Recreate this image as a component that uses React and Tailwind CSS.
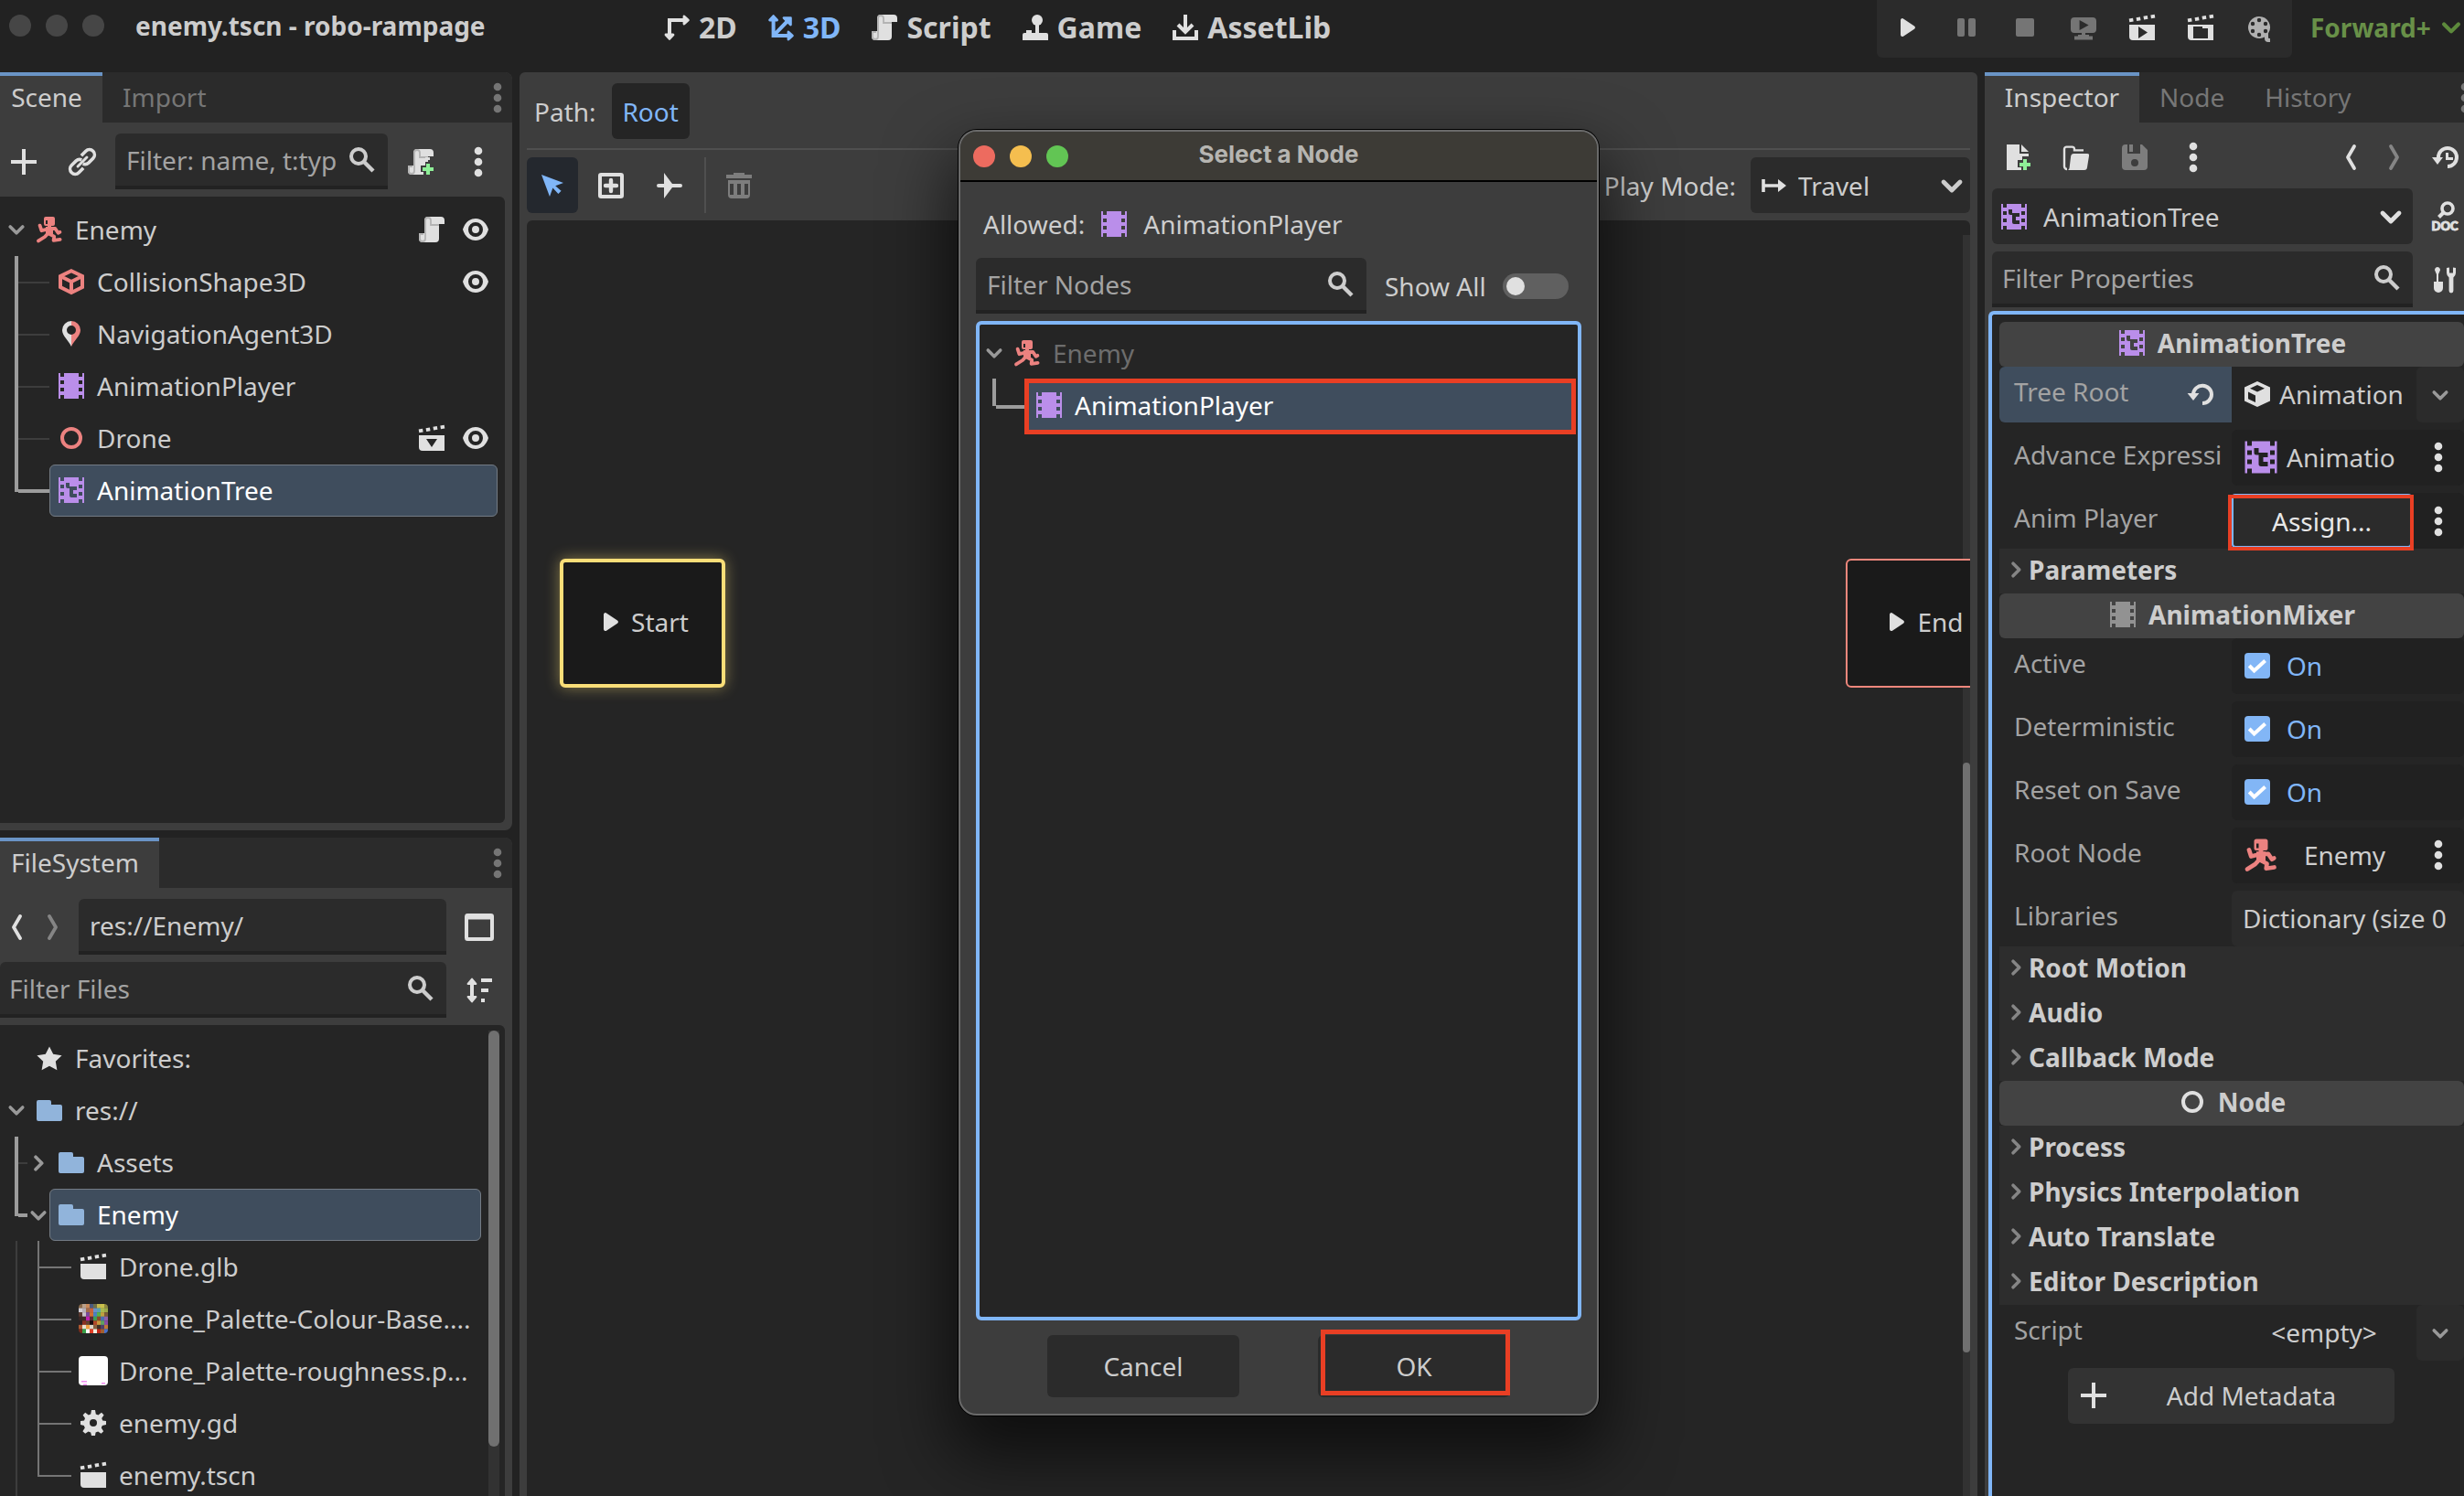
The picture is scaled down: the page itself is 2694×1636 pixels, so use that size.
import React from "react";

/* ---------- icons, drawn on a 16 unit grid ---------- */

function Icon({ size = "size-8", className = "", children }) {
  return (
    <svg viewBox="0 0 16 16" aria-hidden="true" className={`${size} shrink-0 ${className}`} fill="currentColor">
      {children}
    </svg>
  );
}

const FILM =
  "M1 1v14h1v-2h2v2h8v-2h2v2h1V1h-1v2h-2V1H4v2H2V1zM2 5h2v2H2zM12 5h2v2h-2zM2 9h2v2H2zM12 9h2v2h-2z";

const AnimationPlayer = ({ size, className = "text-[#ba8eea]" }) => (
  <Icon size={size} className={className}>
    <path fillRule="evenodd" d={FILM} />
  </Icon>
);

const AnimationTree = ({ size, className = "text-[#ba8eea]" }) => (
  <Icon size={size} className={className}>
    <path fillRule="evenodd" d={FILM + "M5 4v2a1 1 0 0 0 1 1h1v4a1 1 0 0 0 1 1h3v-2H9V8h2V6H7V4z"} />
  </Icon>
);

const Runner = ({ size }) => (
  <Icon size={size} className="text-[#ec8280]">
    <path fillRule="evenodd" d="M6 1h4a1 1 0 0 1 1 1v3a1 1 0 0 1-1 1H9v1H7V6H6a1 1 0 0 1-1-1V2a1 1 0 0 1 1-1zm0 2v2h1V3z" />
    <path d="M6 6.500h4v4L8.500 11.500 6 10z" />
    <path
      d="M2.800 5.800 3.700 8.600 7 7.800M9.500 7.500h1.700l1.600 2.400.9-.5M7.500 9.800 5.500 12 2 14.200M8 10.400l2.600 1.400-.3 2.100 3.500-.5"
      fill="none"
      stroke="currentColor"
      strokeWidth="1.900"
      strokeLinecap="round"
      strokeLinejoin="round"
    />
  </Icon>
);

const ScriptIcon = ({ plus, size }) => (
  <Icon size={size} className="text-[#e0e0e0]">
    <path d="M6 1a2 2 0 0 0-2 2v7H1v3a2 2 0 0 0 2 2h7a2 2 0 0 0 2-2V5h3V3a2 2 0 0 0-2-2z" />
    <path
      d="M3.500 10.500h-2V13a1.500 1.500 0 0 0 3 0V3A1.500 1.500 0 0 1 6 1.500 1.500 1.500 0 0 1 7.500 3v2.500H12"
      fill="none"
      stroke="#b3b3b3"
      strokeWidth=".9"
    />
    {plus && (
      <>
        <path d="M10.500 5.500H16V16H9.500v-2.500H8v-3.500h2.500z" fill="#3d3d3d" />
        <path d="M10.500 5.500H13v1.500h-1V8h-1.500z" />
        <path d="M11 9h2v2h2v2h-2v2h-2v-2H9v-2h2z" fill="#8eef97" />
      </>
    )}
  </Icon>
);

const Eye = () => (
  <Icon className="text-[#e0e0e0]">
    <path
      fillRule="evenodd"
      d="M8 2C4.500 2 2 4.500 1 8c1 3.500 3.500 6 7 6s6-2.500 7-6c-1-3.500-3.500-6-7-6zm0 2a4 4 0 0 1 0 8 4 4 0 0 1 0-8zm0 2a2 2 0 0 0 0 4 2 2 0 0 0 0-4z"
    />
  </Icon>
);

const CollisionShape = () => (
  <Icon className="text-[#ec8280]">
    <path d="M8 2.100 14 5v6l-6 3-6-3V5zM2 5l6 3 6-3M8 8v6" fill="none" stroke="currentColor" strokeWidth="2" />
  </Icon>
);

const NavAgent = () => (
  <Icon>
    <path d="M8 1a5 5 0 0 0-5 5c0 3.200 3.500 5.500 5 9V8.500a2.500 2.500 0 0 1 0-5z" fill="#e0e0e0" />
    <path d="M8 1a5 5 0 0 1 5 5c0 3.200-3.500 5.500-5 9V8.500a2.500 2.500 0 0 0 0-5z" fill="#ec8280" />
  </Icon>
);

const NodeRing = ({ className = "text-[#ec8280]" }) => (
  <Icon className={className}>
    <circle cx="8" cy="8" r="5" fill="none" stroke="currentColor" strokeWidth="2" />
  </Icon>
);

const Clapper = ({ mark }) => (
  <Icon className="text-[#e0e0e0]">
    <path d="M1 4.200 15 1.800" fill="none" stroke="currentColor" strokeWidth="1.900" strokeDasharray="2.200 1.800" />
    {!mark && <path d="M1 6.500h14V15H3a2 2 0 0 1-2-2z" />}
    {mark === "down" && <path fillRule="evenodd" d="M1 6.500h14V15H3a2 2 0 0 1-2-2zM5 8.500l3 4.500 3-4.500z" />}
    {mark === "play" && <path fillRule="evenodd" d="M1 6.500h14V15H3a2 2 0 0 1-2-2zM6 7.500v6.500l5-3.200z" />}
    {mark === "folder" && <path fillRule="evenodd" d="M1 6.500h14V15H3a2 2 0 0 1-2-2zM4 7.500V14h8V8.500H9v-1z" />}
  </Icon>
);

const Search = () => (
  <Icon className="text-[#cdcdcd]">
    <circle cx="6" cy="6" r="4" fill="none" stroke="currentColor" strokeWidth="2" />
    <path d="m9 9 5 5" stroke="currentColor" strokeWidth="2.200" />
  </Icon>
);

const Plus = () => (
  <Icon className="text-[#e0e0e0]">
    <path d="M7 1h2v6h6v2H9v6H7V9H1V7h6z" />
  </Icon>
);

const LinkIcon = () => (
  <Icon className="text-[#e0e0e0]">
    <g transform="rotate(-45 8 8)" fill="none" stroke="currentColor" strokeWidth="1.800">
      <path d="M6 10.800H2.500a2.800 2.800 0 0 1 0-5.600H6A2.800 2.800 0 0 1 8.500 7" />
      <path d="M10 5.200h3.500a2.800 2.800 0 0 1 0 5.600H10A2.800 2.800 0 0 1 7.500 9" />
      <path d="M4.500 8h7" strokeLinecap="round" strokeWidth="1.500" />
    </g>
  </Icon>
);

const Folder = () => (
  <Icon className="text-[#91b4db]">
    <path d="M2 2.500h6a1 1 0 0 1 1 1v1.500h5a1 1 0 0 1 1 1v7a1 1 0 0 1-1 1H2a1 1 0 0 1-1-1v-9.500a1 1 0 0 1 1-1z" />
  </Icon>
);

const Star = () => (
  <Icon className="text-[#e0e0e0]">
    <path d="m8 1.700 2.100 4.200 4.700.7-3.400 3.300.8 4.700L8 12.400l-4.200 2.200.8-4.700L1.200 6.600l4.700-.7z" />
  </Icon>
);

const Gear = () => (
  <Icon className="text-[#e0e0e0]">
    <path
      fillRule="evenodd"
      d="M7 1h2l.4 2.200 1.300.5 1.800-1.300 1.300 1.300-1.200 1.800.5 1.300L15 7v2l-2.100.5-.5 1.200 1.200 1.900-1.300 1.300-1.700-1.200-1.300.5L9 15H7l-.4-1.800-1.300-.5-1.700 1.200-1.400-1.300 1.200-1.900-.5-1.200L1 9V7l2-.2.5-1.300-1.200-1.800 1.300-1.300 1.800 1.300 1.200-.5zM8 6a2 2 0 0 0 0 4 2 2 0 0 0 0-4z"
    />
  </Icon>
);

function Chevron({ dir = "down", className = "text-[#999]", size = "size-6" }) {
  const d = dir === "down" ? "M3.500 6 8 10.500 12.500 6" : "M6 3.500 10.500 8 6 12.500";
  return (
    <Icon size={size} className={className}>
      <path d={d} fill="none" stroke="currentColor" strokeWidth="2.400" strokeLinecap="round" strokeLinejoin="round" />
    </Icon>
  );
}

function Dots({ className = "text-[#e0e0e0]" }) {
  return (
    <svg viewBox="0 0 10 34" aria-hidden="true" className={`h-[34px] w-[10px] shrink-0 ${className}`} fill="currentColor">
      <circle cx="5" cy="5" r="4.300" />
      <circle cx="5" cy="17" r="4.300" />
      <circle cx="5" cy="29" r="4.300" />
    </svg>
  );
}

const Angle = ({ dir, size, className = "text-[#e0e0e0]" }) => (
  <Icon size={size} className={className}>
    <path
      d={dir === "left" ? "M10 2 6.500 8l3.500 6" : "M6 2l3.500 6L6 14"}
      fill="none"
      stroke="currentColor"
      strokeWidth="1.900"
      strokeLinecap="round"
      strokeLinejoin="round"
    />
  </Icon>
);

const PlaySmall = () => (
  <Icon size="size-8" className="text-[#e0e0e0]">
    <path d="M4 4v8a1 1 0 0 0 1.500.9l6-4a1 1 0 0 0 0-1.700l-6-4A1 1 0 0 0 4 4z" />
  </Icon>
);

/* ---------- shared pieces ---------- */

function IconButton({ label, className = "", children }) {
  return (
    <button type="button" aria-label={label} className={`flex shrink-0 items-center justify-center rounded-md ${className}`}>
      {children}
    </button>
  );
}

function SearchBox({ placeholder, className = "", pad = "px-3" }) {
  return (
    <div className={`flex h-[61px] min-w-0 items-center rounded-t-md border-b-4 border-[#222] bg-[#2b2b2b] ${pad} ${className}`}>
      <input
        type="text"
        aria-label={placeholder}
        placeholder={placeholder}
        className="w-full min-w-0 bg-transparent text-[#cdcdcd] outline-none placeholder:text-[#a3a3a3]"
      />
      <Search />
    </div>
  );
}

function Tab({ active, className = "", children }) {
  return (
    <button
      type="button"
      role="tab"
      aria-selected={!!active}
      className={`h-[55px] shrink-0 border-t-4 pb-1.5 ${
        active ? "border-[#6a94c6] bg-[#3d3d3d] text-[#cdcdcd]" : "border-transparent text-[#767676]"
      } ${className}`}
    >
      {children}
    </button>
  );
}

/* ---------- top bar ---------- */

const MODES = [
  {
    name: "2D",
    icon: (
      <Icon className="text-[#e0e0e0]">
        <path d="M4 13V4h9" fill="none" stroke="currentColor" strokeWidth="2" />
        <path
          d="m12 2 2.200 2L12 6zM2 12l2 2.200L6 12z"
          stroke="currentColor"
          strokeWidth="1.400"
          strokeLinejoin="round"
        />
      </Icon>
    ),
  },
  {
    name: "3D",
    active: true,
    icon: (
      <Icon className="text-[#80b6f8]">
        <path d="M3.800 3v9.500H13M4 12.300 12 4" fill="none" stroke="currentColor" strokeWidth="2" />
        <path
          d="M1.800 4 3.800 1.800 5.800 4zM12 10.500l2.200 2-2.200 2zM9.500 2.800h3.700v3.700z"
          stroke="currentColor"
          strokeWidth="1.400"
          strokeLinejoin="round"
        />
      </Icon>
    ),
  },
  { name: "Script", icon: <ScriptIcon /> },
  {
    name: "Game",
    icon: (
      <Icon className="text-[#e0e0e0]">
        <circle cx="9" cy="4" r="3" />
        <path d="M8 6h2v5h4a1 1 0 0 1 1 1v3H1v-3a1 1 0 0 1 1-1h1V9.500h3V11h2z" />
      </Icon>
    ),
  },
  {
    name: "AssetLib",
    icon: (
      <Icon className="text-[#e0e0e0]">
        <path d="M8 1v9M4 6.500l4 4 4-4M2 9.500V14h12V9.500" fill="none" stroke="currentColor" strokeWidth="2" />
      </Icon>
    ),
  },
];

const RUN_BUTTONS = [
  ["Play", <PlaySmall />],
  [
    "Pause",
    <Icon className="text-[#757575]">
      <rect x="3" y="3" width="4" height="10" rx="1" />
      <rect x="9" y="3" width="4" height="10" rx="1" />
    </Icon>,
  ],
  [
    "Stop",
    <Icon className="text-[#757575]">
      <rect x="3" y="3" width="10" height="10" rx="1" />
    </Icon>,
  ],
  [
    "Remote Debug",
    <Icon className="text-[#757575]">
      <path fillRule="evenodd" d="M3 2.500h10a2 2 0 0 1 2 2v4.500a2 2 0 0 1-2 2H9v1h2v.8h2v2H3v-2h2V12h2v-1H3a2 2 0 0 1-2-2V4.500a2 2 0 0 1 2-2zM5.800 4v5.500l5-2.700z" />
    </Icon>,
  ],
  ["Play Scene", <Clapper mark="play" />],
  ["Play Custom Scene", <Clapper mark="folder" />],
  [
    "Movie Maker",
    <Icon className="text-[#b0b0b0]">
      <path
        fillRule="evenodd"
        d="M8 2a6 6 0 1 0 3 11.200V14a2 2 0 0 0 2 2h1v-2h-.5a.5.500 0 0 1-.5-.5V11.300A6 6 0 0 0 8 2zm0 .9a1.100 1.100 0 1 1 0 2.200 1.100 1.100 0 0 1 0-2.200zm0 8a1.100 1.100 0 1 1 0 2.200 1.100 1.100 0 0 1 0-2.200zM4.500 4.900a1.100 1.100 0 1 1 0 2.200 1.100 1.100 0 0 1 0-2.200zm7 0a1.100 1.100 0 1 1 0 2.200 1.100 1.100 0 0 1 0-2.200zm-7 4a1.100 1.100 0 1 1 0 2.200 1.100 1.100 0 0 1 0-2.200zm7 0a1.100 1.100 0 1 1 0 2.200 1.100 1.100 0 0 1 0-2.200z"
      />
    </Icon>,
  ],
];

function TopBar() {
  return (
    <header className="flex h-[79px] shrink-0 items-start font-bold text-[#cdcdcd]">
      <div className="flex h-14 w-[724px] shrink-0 items-center pl-[10px]">
        <div className="flex gap-4">
          <span className="size-6 rounded-full bg-[#464646]" />
          <span className="size-6 rounded-full bg-[#464646]" />
          <span className="size-6 rounded-full bg-[#464646]" />
        </div>
        <h1 className="ml-[34px]">enemy.tscn - robo-rampage</h1>
      </div>
      <nav className="flex h-[60px] items-center gap-8 text-[32px]">
        {MODES.map((m) => (
          <button
            key={m.name}
            type="button"
            className={`flex items-center gap-2 ${m.active ? "text-[#80b6f8]" : ""}`}
          >
            {m.icon}
            {m.name}
          </button>
        ))}
      </nav>
      <div className="ml-auto flex h-[63px] items-center gap-8 rounded-b-md bg-[#2b2b2b] pr-5 pl-[18px] pb-1">
        {RUN_BUTTONS.map(([label, icon]) => (
          <IconButton key={label} label={label} className="size-8">
            {icon}
          </IconButton>
        ))}
      </div>
      <button type="button" className="flex h-[60px] w-[188px] items-center justify-between pl-5 text-[#689048]">
        Forward+
        <Chevron className="text-[#5d8a3c]" size="size-7" />
      </button>
    </header>
  );
}

/* ---------- trees ---------- */

function Branch({ last, width, thick = true }) {
  return (
    <div className="flex h-full shrink-0">
      <div className={`${thick ? "w-1 bg-[#9c9c9c]" : "w-0.5 bg-[#757575]"} ${last ? "h-[30px]" : "h-full"}`} />
      <div className={`flex h-full items-center ${width}`}>
        <div className={`w-full ${!thick ? "h-0.5 bg-[#757575]" : last ? "h-1 bg-[#9c9c9c]" : "h-0.5 bg-[#3d3d3d]"}`} />
      </div>
    </div>
  );
}

const SCENE = [
  { name: "CollisionShape3D", icon: <CollisionShape />, eye: true },
  { name: "NavigationAgent3D", icon: <NavAgent /> },
  { name: "AnimationPlayer", icon: <AnimationPlayer /> },
  { name: "Drone", icon: <NodeRing />, eye: true, scene: true },
  { name: "AnimationTree", icon: <AnimationTree />, selected: true },
];

function SceneDock() {
  return (
    <section className="flex min-h-0 flex-col overflow-hidden rounded-r-lg bg-[#3d3d3d] pb-2">
      <div role="tablist" className="flex items-center bg-[#2b2b2b]">
        <Tab active className="w-[112px] pr-2.5">Scene</Tab>
        <Tab className="px-[22px]">Import</Tab>
        <IconButton label="Scene dock menu" className="mr-[11px] ml-auto">
          <Dots className="text-[#757575]" />
        </IconButton>
      </div>
      <div className="flex items-center py-3 pr-8 pb-2 pl-[10px]">
        <IconButton label="Add node"><Plus /></IconButton>
        <IconButton label="Instantiate scene" className="mr-5 ml-8"><LinkIcon /></IconButton>
        <SearchBox placeholder="Filter: name, t:typ" className="flex-1" />
        <IconButton label="Attach script" className="mr-[42px] ml-5"><ScriptIcon plus /></IconButton>
        <IconButton label="More options"><Dots /></IconButton>
      </div>
      <ul className="mr-2 min-h-0 flex-1 rounded-r-md bg-[#252525] pt-2">
        <li className="flex h-[57px] items-center pr-4 pb-0.5 pl-[6px]">
          <Chevron />
          <span className="mr-3 ml-2"><Runner /></span>
          Enemy
          <span className="ml-auto flex gap-4"><ScriptIcon /><Eye /></span>
        </li>
        {SCENE.map((n, i) => (
          <li key={n.name} className="flex h-[57px] items-center pr-2 pl-4">
            <Branch last={i === SCENE.length - 1} width="w-[34px]" />
            <div
              className={`flex h-full flex-1 items-center gap-3 rounded-md border px-[7px] pb-0.5 ${
                n.selected ? "border-[#737b84] bg-[#3f4d5d] text-white" : "border-transparent"
              }`}
            >
              {n.icon}
              {n.name}
              <span className="ml-auto flex gap-4">
                {n.scene && <Clapper mark="down" />}
                {n.eye && <Eye />}
              </span>
            </div>
          </li>
        ))}
      </ul>
    </section>
  );
}

const SWATCHES = [
  "#8a6a4a", "#b9a08a", "#c98a5a", "#4a5a80", "#6f7048", "#c4b84e", "#c9c04c", "#8f8a40",
  "#d0ccd4", "#b8b0b8", "#a06a4a", "#c8643c", "#6a90c8", "#5aa0b0", "#a8b850", "#9aa848",
  "#5a3a30", "#c8c0c8", "#7a4a9a", "#d07030", "#4a80c0", "#58b048", "#c0a040", "#7a5a3a",
  "#3a2826", "#402a28", "#c020b0", "#5a2a3a", "#3ea050", "#8a4a30", "#4a70b0", "#9060a8",
  "#2a2024", "#8a3020", "#604030", "#180c10", "#b04828", "#c89840", "#60a060", "#8a4aa0",
  "#b05a30", "#e8e0d0", "#f0a040", "#e0d8c8", "#8a6040", "#403028", "#50406a", "#c07838",
  "#7a2a1a", "#38a048", "#ffffff", "#e04028", "#f0f0e0", "#c02818", "#a06030", "#4a70c8",
];

const PaletteThumb = () => (
  <svg viewBox="0 0 8 7" preserveAspectRatio="none" aria-hidden="true" className="size-8 shrink-0 rounded-sm">
    {SWATCHES.map((c, i) => (
      <rect key={i} x={i % 8} y={Math.floor(i / 8)} width="1.050" height="1.050" fill={c} />
    ))}
  </svg>
);

const WhiteThumb = () => (
  <svg viewBox="0 0 32 32" aria-hidden="true" className="size-8 shrink-0 rounded-sm">
    <rect width="32" height="32" fill="#fff" />
    <path d="M3 27h6v1.500H3zM5 30.500h4V32H5zM25 29h4v1.500h-4z" fill="#f08af0" />
  </svg>
);

const FILES = [
  { name: "Drone.glb", icon: <Clapper /> },
  { name: "Drone_Palette-Colour-Base....", icon: <PaletteThumb /> },
  { name: "Drone_Palette-roughness.p...", icon: <WhiteThumb /> },
  { name: "enemy.gd", icon: <Gear /> },
  { name: "enemy.tscn", icon: <Clapper /> },
];

function FileSystemDock() {
  return (
    <section className="flex min-h-0 flex-col overflow-hidden rounded-tr-lg bg-[#3d3d3d]">
      <div role="tablist" className="flex items-center bg-[#2b2b2b]">
        <Tab active className="w-[174px] pr-2.5">FileSystem</Tab>
        <IconButton label="FileSystem dock menu" className="mr-[11px] ml-auto">
          <Dots className="text-[#757575]" />
        </IconButton>
      </div>
      <div className="flex items-center pt-3 pr-5">
        <IconButton label="Back" className="ml-[2px]"><Angle dir="left" /></IconButton>
        <IconButton label="Forward" className="mr-3 ml-2"><Angle dir="right" className="text-[#858585]" /></IconButton>
        <input
          type="text"
          aria-label="Path"
          defaultValue="res://Enemy/"
          className="h-[61px] min-w-0 flex-1 rounded-t-md border-b-4 border-[#222] bg-[#2b2b2b] px-3 text-[#cdcdcd] outline-none"
        />
        <IconButton label="Toggle split mode" className="ml-5">
          <Icon className="text-[#e0e0e0]">
            <rect x="1" y="1.500" width="14" height="13" rx=".6" fill="none" stroke="currentColor" strokeWidth="2" />
            <path d="M1 3h14" stroke="currentColor" strokeWidth="1.500" />
          </Icon>
        </IconButton>
      </div>
      <div className="flex items-center pt-2 pr-5 pb-2">
        <SearchBox placeholder="Filter Files" className="flex-1" pad="pr-3 pl-[10px]" />
        <IconButton label="Sort files" className="ml-5">
          <Icon className="text-[#e0e0e0]">
            <path d="M4 3v10" stroke="currentColor" strokeWidth="2" />
            <path d="M1.800 4.500 4 1.800l2.200 2.700zM1.800 11.500 4 14.200l2.200-2.700z" stroke="currentColor" strokeWidth="1" strokeLinejoin="round" />
            <path d="M9 1.500h6v2H9zM9 7h4v2H9zM9 12.500h2v2H9z" />
          </Icon>
        </IconButton>
      </div>
      <div className="mr-2 flex min-h-0 flex-1 overflow-hidden rounded-tr-md bg-[#252525]">
        <ul className="w-[526px] pt-2">
          <li className="flex h-[57px] items-center gap-3 pb-0.5 pl-[38px]"><Star />Favorites:</li>
          <li className="flex h-[57px] items-center pb-0.5 pl-[6px]">
            <Chevron />
            <span className="mr-3 ml-2"><Folder /></span>
            res://
          </li>
          <li className="flex h-[57px] items-center pl-4">
            <Branch width="w-[10px]" />
            <Chevron dir="right" />
            <div className="flex h-full flex-1 items-center gap-3 pb-0.5 pl-2">
              <Folder />
              Assets
            </div>
          </li>
          <li className="flex h-[57px] items-center pl-4">
            <Branch last width="w-[10px]" />
            <Chevron />
            <div className="flex h-full flex-1 items-center gap-3 rounded-md border border-[#737b84] bg-[#3f4d5d] pb-0.5 pl-[7px] text-white">
              <Folder />
              Enemy
            </div>
          </li>
          {FILES.map((f, i) => (
            <li key={f.name} className="flex h-[57px] items-center pl-[17px] whitespace-nowrap">
              <div className="mr-[22px] h-full w-0.5 bg-[#3d3d3d]" />
              <Branch last={i === FILES.length - 1} thick={false} width="w-[35px]" />
              <div className="flex h-full flex-1 items-center gap-3 pb-0.5 pl-2">
                {f.icon}
                {f.name}
              </div>
            </li>
          ))}
        </ul>
        <div className="mt-1.5 ml-2 w-3 bg-[#323232]">
          <div className="h-[455px] rounded-full bg-[#707070]" />
        </div>
      </div>
    </section>
  );
}

/* ---------- state machine editor ---------- */

function StateNode({ className, children }) {
  return (
    <div className={`absolute top-[370px] flex h-[141px] w-[181px] items-center justify-center gap-1.5 rounded-md bg-[#1a1a1a] pb-1 ${className}`}>
      <PlaySmall />
      {children}
    </div>
  );
}

function GraphEditor() {
  return (
    <main className="flex min-w-0 flex-col rounded-t-md bg-[#3d3d3d] px-2">
      <div className="flex items-center pt-3 pb-2.5 pl-2">
        Path:
        <button type="button" className="ml-[17px] h-[61px] w-[85px] rounded-md bg-[#252525] text-[#80b6f8]">
          Root
        </button>
      </div>
      <hr className="mb-2 border-t-2 border-[#4f4f4f]" />
      <div className="mb-2 flex h-[61px] items-center">
        <IconButton label="Select and move nodes" className="h-full w-14 bg-[#24282e]">
          <Icon className="text-[#80b6f8]">
            <path d="m2 2 4.500 12 1.700-4.700 3 3.200 1.600-1.600-3.200-2.800L14 6.500z" />
          </Icon>
        </IconButton>
        <IconButton label="Create new nodes" className="ml-5 h-full w-8">
          <Icon className="text-[#e0e0e0]">
            <rect x="2" y="2" width="12" height="12" rx=".6" fill="none" stroke="currentColor" strokeWidth="2" />
            <path d="M8 5v6M5 8h6" stroke="currentColor" strokeWidth="2.200" strokeLinecap="round" />
          </Icon>
        </IconButton>
        <IconButton label="Connect nodes" className="ml-8 h-full w-8">
          <Icon className="text-[#e0e0e0]">
            <path d="M5 1v6H2a1 1 0 0 0 0 2h3v6l4.500-6H14a1 1 0 0 0 0-2H9.500z" />
          </Icon>
        </IconButton>
        <div className="mr-5 ml-[22px] h-full w-0.5 bg-[#4f4f4f]" />
        <IconButton label="Remove selected" className="h-full w-8">
          <Icon className="text-[#7d7d7d]">
            <path fillRule="evenodd" d="M5 1h6v1h4v2H1V2h4zM2 5h12v8a2 2 0 0 1-2 2H4a2 2 0 0 1-2-2zm1 2v6h2V7zm4 0v6h2V7zm4 0v6h2V7z" />
          </Icon>
        </IconButton>
        <label htmlFor="play-mode" className="mr-4 ml-auto">Play Mode:</label>
        <div className="relative flex h-full w-60 items-center rounded-md bg-[#2b2b2b]">
          <select
            id="play-mode"
            className="h-full w-full appearance-none bg-transparent pl-[52px] text-[#cdcdcd] outline-none"
          >
            <option>Travel</option>
          </select>
          <span className="pointer-events-none absolute left-2.5">
            <Icon className="text-[#e0e0e0]">
              <path d="M2 4.500v7M2 8h11" fill="none" stroke="currentColor" strokeWidth="1.800" />
              <path d="M10 4.500 14.500 8 10 11.500z" />
            </Icon>
          </span>
          <span className="pointer-events-none absolute right-1">
            <Chevron className="text-[#cdcdcd]" size="size-8" />
          </span>
        </div>
      </div>
      <div className="relative flex min-h-0 flex-1 justify-end overflow-hidden rounded-t-md bg-[#252525]">
        <div className="mt-4 flex w-2 flex-col bg-[#323232] pt-[577px]">
          <div className="h-[645px] rounded-full bg-[#707070]" />
        </div>
        <StateNode className="left-9 border-4 border-[#fade78] shadow-[0_0_16px_rgba(250,222,120,0.45)]">Start</StateNode>
        <StateNode className="left-[1442px] border-2 border-[#f0877c] pr-3">End</StateNode>
      </div>
    </main>
  );
}

/* ---------- inspector ---------- */

function Category({ icon, children }) {
  return (
    <h2 className="flex h-[49px] items-center justify-center gap-3 rounded-md bg-[#434343] pb-1 font-bold">
      {icon}
      {children}
    </h2>
  );
}

function Section({ children }) {
  return (
    <button type="button" className="flex h-[49px] w-full items-center gap-0.5 bg-[#2d2d2d] pb-1 pl-1.5 text-left font-bold">
      <Chevron dir="right" className="text-[#858585]" />
      {children}
    </button>
  );
}

function Property({ label, labelClass = "", valueClass = "", htmlFor, extra, children }) {
  const Label = htmlFor ? "label" : "span";
  return (
    <div className="flex h-[61px] items-center">
      <div className={`flex h-full w-[254px] shrink-0 items-center justify-between rounded-l-md pb-2 pl-4 ${labelClass}`}>
        <Label htmlFor={htmlFor} className="whitespace-nowrap text-[#a3a3a3]">
          {label}
        </Label>
        {extra}
      </div>
      <div className={`flex h-full min-w-0 flex-1 items-center rounded-md ${valueClass}`}>{children}</div>
    </div>
  );
}

function CheckProperty({ id, label }) {
  return (
    <Property label={label} htmlFor={id} valueClass="bg-[#212121] pb-0.5 pl-[14px]">
      <span className="relative mr-[18px] flex size-7 items-center justify-center">
        <input id={id} type="checkbox" defaultChecked className="size-7 appearance-none rounded bg-[#82b6f6]" />
        <svg viewBox="0 0 14 14" aria-hidden="true" className="pointer-events-none absolute size-7">
          <path d="m2.600 7 2.700 2.700 6-5.400" fill="none" stroke="#fff" strokeWidth="2" />
        </svg>
      </span>
      <span className="text-[#80b6f8]">On</span>
    </Property>
  );
}

function Inspector() {
  return (
    <aside className="flex min-w-0 flex-col overflow-hidden bg-[#3d3d3d]">
      <div role="tablist" className="flex items-center overflow-hidden bg-[#2b2b2b]">
        <Tab active className="w-[169px]">Inspector</Tab>
        <Tab className="px-[22px]">Node</Tab>
        <Tab className="px-[22px]">History</Tab>
        <IconButton label="Inspector dock menu" className="-mr-1.5 ml-auto">
          <Dots className="text-[#757575]" />
        </IconButton>
      </div>
      <div className="flex h-[72px] items-center pt-1 pr-1 pl-5">
        <IconButton label="New resource">
          <Icon className="text-[#e0e0e0]">
            <path d="M2 1h7v5h5v1.500h-3.500v2H8v4h2V15H2z" />
            <path d="M10 1l4 4h-4z" />
            <path d="M11 9h2v2h2v2h-2v2h-2v-2H9v-2h2z" fill="#8eef97" />
          </Icon>
        </IconButton>
        <IconButton label="Load resource" className="mx-8">
          <Icon className="text-[#e0e0e0]">
            <path d="M3 14.500a1.500 1.500 0 0 1-1.500-1.500V3.500A1.200 1.200 0 0 1 2.700 2.300h3A1.200 1.200 0 0 1 7 3.500v.7h5" fill="none" stroke="currentColor" strokeWidth="1.200" />
            <path d="M6.500 6H14a1 1 0 0 1 1 1.200l-1 6.300a1.600 1.600 0 0 1-1.600 1.500H3.300a1.500 1.500 0 0 0 1-1.300l.8-6.400A1.500 1.500 0 0 1 6.500 6z" />
          </Icon>
        </IconButton>
        <IconButton label="Save resource">
          <Icon className="text-[#7d7d7d]">
            <path fillRule="evenodd" d="M3 1h1v5h7V1h1l3 3v9a2 2 0 0 1-2 2H3a2 2 0 0 1-2-2V3a2 2 0 0 1 2-2zm5 8a2 2 0 0 0 0 4 2 2 0 0 0 0-4z" />
            <path d="M5 1h2v4H5z" />
          </Icon>
        </IconButton>
        <IconButton label="Resource options" className="ml-[43px]"><Dots /></IconButton>
        <IconButton label="Previous object" className="mr-4 ml-auto"><Angle dir="left" /></IconButton>
        <IconButton label="Next object" className="mr-6"><Angle dir="right" className="text-[#858585]" /></IconButton>
        <IconButton label="Object history">
          <Icon className="text-[#e0e0e0]">
            <path d="M4 8a5 5 0 1 1 5 5" fill="none" stroke="currentColor" strokeWidth="2" />
            <path d="M.5 8h6l-3 4zM8 5.500h1.500V8H12v1.500H8z" />
          </Icon>
        </IconButton>
      </div>
      <div className="flex items-center pr-[5px] pl-2">
        <div className="relative flex h-[61px] flex-1 items-center rounded-md bg-[#2b2b2b]">
          <select
            aria-label="Edited object"
            className="h-full w-full appearance-none bg-transparent pl-[56px] text-[#cdcdcd] outline-none"
          >
            <option>AnimationTree</option>
          </select>
          <span className="pointer-events-none absolute left-2"><AnimationTree /></span>
          <span className="pointer-events-none absolute right-2"><Chevron className="text-[#e0e0e0]" size="size-8" /></span>
        </div>
        <button type="button" aria-label="Open documentation" className="ml-[19px] flex shrink-0">
          <svg viewBox="0 0 32 34" aria-hidden="true" className="h-[34px] w-8 text-[#e0e0e0]" fill="currentColor">
            <circle cx="19" cy="8" r="6" fill="none" stroke="currentColor" strokeWidth="3.600" />
            <path d="m14.500 12.500-5 5" stroke="currentColor" strokeWidth="4" />
            <text x="16" y="32" textAnchor="middle" fontSize="13" fontWeight="900" fontFamily="Lato, sans-serif" stroke="currentColor" strokeWidth="1">
              DOC
            </text>
          </svg>
        </button>
      </div>
      <div className="flex items-center pt-2 pr-[5px] pb-1 pl-2">
        <SearchBox placeholder="Filter Properties" className="flex-1" pad="pr-3 pl-[11px]" />
        <IconButton label="Property options" className="ml-[19px]">
          <Icon className="text-[#e0e0e0]">
            <path d="M4 1a1.500 1.500 0 0 0-1.200 2.400L3.500 5v4H2v3.500a2.500 2.500 0 0 0 5 0V9H4.500V5l.7-1.600A1.500 1.500 0 0 0 4 1z" />
            <path d="M9 1.500v2.800a3 3 0 0 0 1.300 2.400V14a1 1 0 0 0 2.400 0V6.700A3 3 0 0 0 14 4.300V1.500l-1.500-.3v3h-2v-3z" />
          </Icon>
        </IconButton>
      </div>
      <div className="ml-1 min-h-0 flex-1 overflow-hidden rounded-tl-md border-t-4 border-l-4 border-[#80b6f8] bg-[#252525] pt-2 pl-2">
        <Category icon={<AnimationTree />}>AnimationTree</Category>
        <div className="flex flex-col gap-2">
          <Property
            label="Tree Root"
            labelClass="bg-[#3f4d5d] pr-[18px]"
            extra={
              <IconButton label="Revert value" className="pt-1">
                <Icon className="text-[#e0e0e0]">
                  <path d="M4 8.500a5 4.800 0 1 1 5 5" fill="none" stroke="currentColor" strokeWidth="2" />
                  <path d="M.8 8h6.400L4 12z" />
                </Icon>
              </IconButton>
            }
          >
            <span className="flex flex-1 items-center gap-2 pb-0.5 pl-3">
              <Icon className="text-[#e0e0e0]">
                <path fillRule="evenodd" d="M8 1 1 4.200v7.600L8 15l7-3.200V4.200zM8 3l4 1.900L8 6.800 4 4.900zM3 6.800l4 1.900v3.800l-4-1.900z" />
              </Icon>
              Animation
            </span>
            <button type="button" aria-label="Tree Root options" className="flex h-full w-[52px] items-center justify-center rounded-md bg-[#2b2b2b]">
              <Chevron />
            </button>
          </Property>
          <Property label="Advance Expressi" valueClass="bg-[#212121] pr-[23px] pb-0.5 pl-3">
            <AnimationTree size="size-10" />
            <span className="ml-2">Animatio</span>
            <button type="button" aria-label="Advance Expression options" className="ml-auto"><Dots /></button>
          </Property>
          <Property label="Anim Player" valueClass="relative bg-[#212121] pr-[23px]">
            <button type="button" className="h-[59px] w-[197px] rounded border-2 border-[#80b6f8] bg-[#2b2b2b] text-[#e8e8e8]">
              Assign...
            </button>
            <span className="pointer-events-none absolute top-0.5 -left-1 h-[61px] w-[203px] border-4 border-[#e93f24]" />
            <button type="button" aria-label="Anim Player options" className="ml-auto"><Dots /></button>
          </Property>
        </div>
        <Section>Parameters</Section>
        <Category icon={<AnimationPlayer className="text-[#929292]" />}>AnimationMixer</Category>
        <div className="flex flex-col gap-2">
          <CheckProperty id="active" label="Active" />
          <CheckProperty id="deterministic" label="Deterministic" />
          <CheckProperty id="reset-on-save" label="Reset on Save" />
          <Property label="Root Node" valueClass="bg-[#212121] pr-[23px] pb-0.5 pl-3">
            <Runner size="size-10" />
            <span className="ml-[27px]">Enemy</span>
            <button type="button" aria-label="Root Node options" className="ml-auto"><Dots /></button>
          </Property>
          <Property label="Libraries" valueClass="bg-[#2b2b2b] pb-0.5 pl-3">
            <span className="whitespace-nowrap">Dictionary (size 0</span>
          </Property>
        </div>
        <Section>Root Motion</Section>
        <Section>Audio</Section>
        <Section>Callback Mode</Section>
        <Category icon={<NodeRing className="text-[#e0e0e0]" />}>Node</Category>
        <Section>Process</Section>
        <Section>Physics Interpolation</Section>
        <Section>Auto Translate</Section>
        <Section>Editor Description</Section>
        <Property label="Script">
          <span className="flex-1 pb-0.5 text-center">&lt;empty&gt;</span>
          <button type="button" aria-label="Script options" className="flex h-full w-[52px] items-center justify-center rounded-md bg-[#2b2b2b]">
            <Chevron />
          </button>
        </Property>
        <button type="button" className="mt-2 ml-[75px] flex h-[61px] w-[357px] items-center rounded-md bg-[#333] pb-0.5 pl-3">
          <Plus />
          <span className="flex-1 text-center">Add Metadata</span>
        </button>
      </div>
    </aside>
  );
}

/* ---------- dialog ---------- */

function SelectNodeDialog() {
  return (
    <div
      role="dialog"
      aria-label="Select a Node"
      className="absolute top-[142px] left-[1048px] flex h-[1406px] w-[700px] flex-col rounded-[20px] border-2 border-[#6a6a6a] bg-[#3d3d3d] shadow-[0_36px_70px_10px_rgba(0,0,0,0.6),0_0_0_1px_#000]"
    >
      <div className="relative flex h-[55px] shrink-0 items-center justify-center rounded-t-[18px] border-b-2 border-black bg-[#3d3b36]">
        <div className="absolute left-[14px] flex gap-4">
          <button type="button" aria-label="Close" className="size-6 rounded-full bg-[#ed6b5f]" />
          <button type="button" aria-label="Minimize" className="size-6 rounded-full bg-[#f5be4f]" />
          <button type="button" aria-label="Zoom" className="size-6 rounded-full bg-[#62c554]" />
        </div>
        <h2 className="pb-1 font-[Inter,sans-serif] text-[26px] font-bold text-[#b6b5b1]">Select a Node</h2>
      </div>
      <div className="flex min-h-0 flex-1 flex-col px-[17px]">
        <div className="flex h-[83px] items-center pt-2 pl-2">
          Allowed:
          <span className="mr-4 ml-4"><AnimationPlayer /></span>
          AnimationPlayer
        </div>
        <div className="flex items-center">
          <SearchBox placeholder="Filter Nodes" className="w-[427px]" />
          <label htmlFor="show-all" className="ml-5">Show All</label>
          <input
            id="show-all"
            type="checkbox"
            role="switch"
            className="ml-[18px] flex h-7 w-[72px] appearance-none items-center rounded-full bg-[#606060] pl-1 before:size-5 before:rounded-full before:bg-[#e0e0e0]"
          />
        </div>
        <ul className="mt-2 flex-1 rounded-md border-4 border-[#80b6f8] bg-[#252525] pt-0.5">
          <li className="flex h-[57px] items-center pl-1 text-[#6d6d6d]">
            <Chevron />
            <span className="mr-3 ml-2"><Runner /></span>
            Enemy
          </li>
          <li className="flex h-[61px] items-center pr-0.5 pl-[14px]">
            <Branch last width="w-[31px]" />
            <button type="button" className="flex h-full flex-1 items-center gap-3 border-[5px] border-[#e93f24] bg-[#3f4d5d] pb-1 pl-1.5 text-white">
              <AnimationPlayer />
              AnimationPlayer
            </button>
          </li>
        </ul>
        <div className="flex h-[102px] items-center pb-0.5 pl-[78px]">
          <button type="button" className="h-[68px] w-[210px] rounded-md bg-[#2b2b2b]">Cancel</button>
          <div className="relative ml-[86px]">
            <button type="button" className="h-[68px] w-[210px] rounded-md bg-[#2b2b2b]">OK</button>
            <span className="pointer-events-none absolute -top-1.5 left-[3px] h-[72px] w-[207px] border-[5px] border-[#e93f24]" />
          </div>
        </div>
      </div>
    </div>
  );
}

export default function App() {
  return (
    <div className="relative flex h-screen flex-col overflow-hidden bg-[#222] font-['Noto_Sans',sans-serif] text-[28px] leading-9 text-[#cdcdcd]">
      <TopBar />
      <div className="grid min-h-0 flex-1 grid-cols-[560px_minmax(0,1fr)_524px] gap-2">
        <div className="grid min-h-0 grid-rows-[829fr_720fr] gap-2">
          <SceneDock />
          <FileSystemDock />
        </div>
        <GraphEditor />
        <Inspector />
      </div>
      <SelectNodeDialog />
    </div>
  );
}
